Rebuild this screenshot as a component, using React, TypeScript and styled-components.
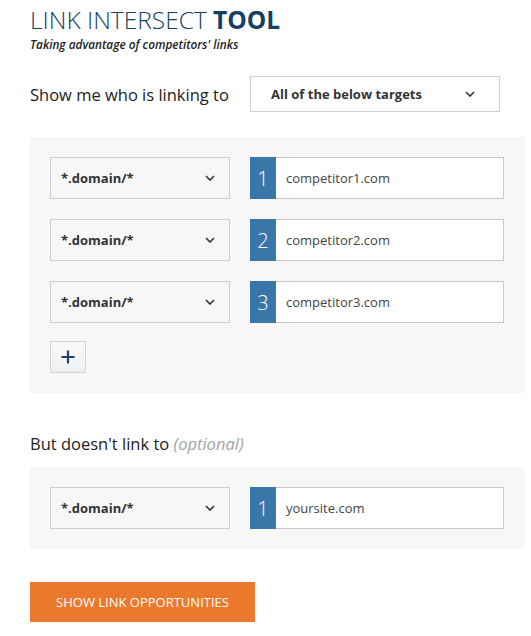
import React from "react";
import styled, { createGlobalStyle } from "styled-components";

const GlobalStyle = createGlobalStyle`
  html, body {
    margin: 0;
    padding: 0;
    background: #fff;
    font-family: "Open Sans", "Liberation Sans", sans-serif;
  }
  * {
    box-sizing: border-box;
  }
`;

const Page = styled.section`
  width: 495px;
  margin-left: 30px;
  padding-top: 4px;
`;

const Title = styled.h1`
  margin: 0;
  font-size: 24.5px;
  font-weight: 300;
  line-height: 32px;
  color: #163f66;
  strong {
    font-weight: 700;
  }
`;

const Subtitle = styled.p`
  margin: 1px 0 0;
  font-size: 11.8px;
  font-style: italic;
  font-weight: 600;
  line-height: 14px;
  color: #222;
`;

const TargetRow = styled.div`
  display: flex;
  align-items: center;
  gap: 20px;
  margin-top: 25px;
`;

const Label = styled.h2`
  margin: 0;
  font-size: 16.5px;
  font-weight: 400;
  color: #222;
  width: 200px;
  flex: none;
  white-space: nowrap;
  em {
    color: #a3a3a3;
    font-style: italic;
    font-weight: 400;
  }
`;

const SectionLabel = styled(Label)`
  width: auto;
  margin: 39px 0 11px;
  line-height: 24px;
`;

const Select = styled.div<{ $width: number; $height: number; $bg: string }>`
  display: flex;
  align-items: center;
  justify-content: space-between;
  width: ${(p) => p.$width}px;
  height: ${(p) => p.$height}px;
  padding: 0 14px 0 10px;
  border: 1px solid #cfcfcf;
  background: ${(p) => p.$bg};
  font-size: 13px;
  font-weight: 700;
  color: #333;
  cursor: pointer;
`;

const WideSelect = styled(Select)`
  padding: 0 24px 0 20px;
`;

const Panel = styled.div`
  background: #f7f7f7;
  padding: 20px 21px 20px 20px;
  display: flex;
  flex-direction: column;
  gap: 20px;
`;

const FirstPanel = styled(Panel)`
  margin-top: 25px;
`;

const Row = styled.div`
  display: flex;
  gap: 20px;
`;

const UrlBox = styled.div`
  display: flex;
  width: 254px;
  height: 42px;
  border: 1px solid #c8c8c8;
  background: #fff;
`;

const Num = styled.span`
  width: 26px;
  flex: none;
  display: flex;
  align-items: center;
  justify-content: center;
  margin: -1px 0 -1px -1px;
  background: #3a77a8;
  color: #fff;
  font-size: 20px;
  font-weight: 300;
`;

const UrlText = styled.span`
  display: flex;
  align-items: center;
  padding-left: 10px;
  font-size: 13px;
  color: #444;
`;

const AddButton = styled.button`
  margin-top: -2px;
  width: 36px;
  height: 32px;
  border: 1px solid #d2d2d2;
  background: linear-gradient(#fafafa, #efefef);
  display: flex;
  align-items: center;
  justify-content: center;
  padding: 0;
  cursor: pointer;
`;

const Submit = styled.button`
  margin-top: 33px;
  width: 225px;
  height: 40px;
  border: 0;
  background: #eb782c;
  color: #fff;
  font-family: "Open Sans", "Liberation Sans", sans-serif;
  font-size: 13px;
  font-weight: 400;
  text-transform: uppercase;
  cursor: pointer;
`;

const Chevron = () => (
  <svg width="10" height="6" viewBox="0 0 10 6" fill="none">
    <path d="M1 1l4 4 4-4" stroke="#333" strokeWidth="1.6" />
  </svg>
);

const Plus = () => (
  <svg width="14" height="14" viewBox="0 0 14 14">
    <path d="M7 0.5v13M0.5 7h13" stroke="#1b4270" strokeWidth="2.2" />
  </svg>
);

function DomainRow({ n, url }: { n: number; url: string }) {
  return (
    <Row>
      <Select $width={180} $height={42} $bg="#f7f7f7">
        <span>*.domain/*</span>
        <Chevron />
      </Select>
      <UrlBox>
        <Num>{n}</Num>
        <UrlText>{url}</UrlText>
      </UrlBox>
    </Row>
  );
}

export default function App() {
  const competitors = ["competitor1.com", "competitor2.com", "competitor3.com"];
  return (
    <Page>
      <GlobalStyle />
      <Title>
        LINK INTERSECT <strong>TOOL</strong>
      </Title>
      <Subtitle>Taking advantage of competitors' links</Subtitle>
      <TargetRow>
        <Label>Show me who is linking to</Label>
        <WideSelect $width={250} $height={36} $bg="#fff">
          <span>All of the below targets</span>
          <Chevron />
        </WideSelect>
      </TargetRow>
      <FirstPanel>
        {competitors.map((c, i) => (
          <DomainRow key={c} n={i + 1} url={c} />
        ))}
        <AddButton type="button" aria-label="add">
          <Plus />
        </AddButton>
      </FirstPanel>
      <SectionLabel>
        But doesn't link to <em>(optional)</em>
      </SectionLabel>
      <Panel>
        <DomainRow n={1} url="yoursite.com" />
      </Panel>
      <Submit type="button">Show link opportunities</Submit>
    </Page>
  );
}
